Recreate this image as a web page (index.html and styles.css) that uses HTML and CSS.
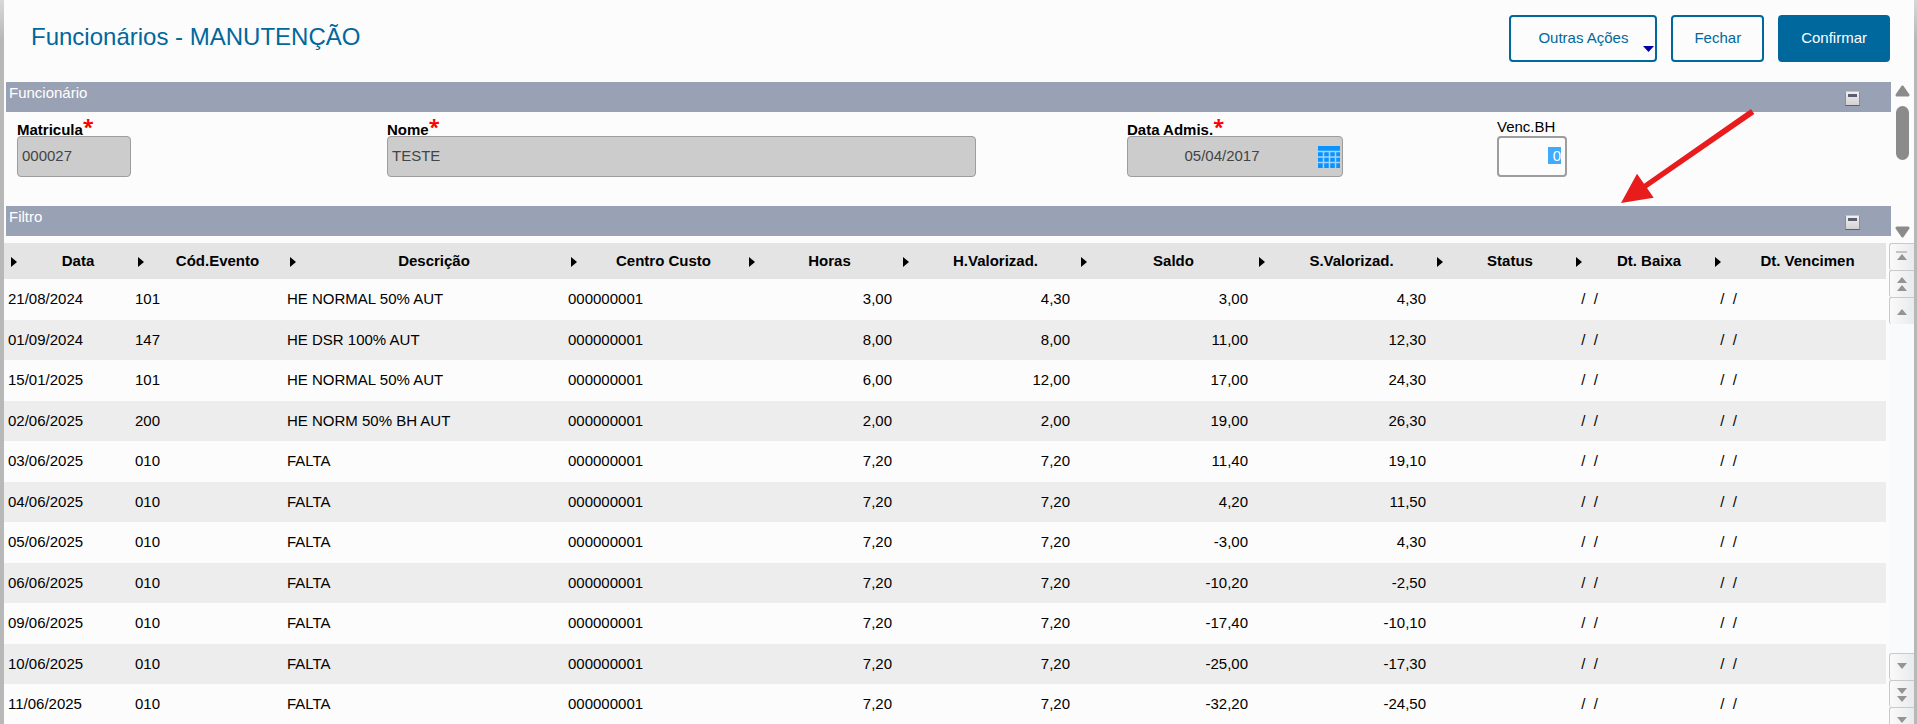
FILE: index.html
```html
<!DOCTYPE html>
<html lang="pt-BR">
  <head>
    <meta charset="utf-8" />
    <title>Funcionários - MANUTENÇÃO</title>
    <meta name="viewport" content="width=device-width, initial-scale=1.0" />
    <link rel="stylesheet" href="styles.css">
  </head>
  <body>
    <div class="window">
      <header class="toolbar">
        <h1>Funcionários - MANUTENÇÃO</h1>
        <div class="actions">
          <button type="button" class="btn btn-menu">
            Outras Ações
            <svg class="caret" width="11" height="6" viewBox="0 0 11 6"><path d="M0 0h11L5.500 6z" fill="#0000a8" /></svg>
          </button>
          <button type="button" class="btn">Fechar</button>
          <button type="button" class="btn btn-primary">Confirmar</button>
        </div>
      </header>

      <div class="form-area">
        <form class="panels">
          <div class="panel-title">
            <h2>Funcionário</h2>
            <button type="button" class="collapse" aria-label="Recolher Funcionário"></button>
          </div>
          <div class="fields">
            <div class="field">
              <label class="required" for="matricula">Matricula<span class="star">*</span></label>
              <input class="w-code" type="text" id="matricula" value="000027" disabled />
            </div>
            <div class="field field-wide">
              <label class="required" for="nome">Nome<span class="star">*</span></label>
              <input class="w-name" type="text" id="nome" value="TESTE" disabled />
            </div>
            <div class="field">
              <label class="required" for="admissao">Data Admis.<span class="star">*</span></label>
              <div class="date w-date">
                <input type="text" id="admissao" value="05/04/2017" disabled />
                <svg class="calendar" width="22" height="22" viewBox="0 0 22 22">
                  <path d="M0 0h22v22H0z" fill="#0a93ff" />
                  <path d="M0 5.500h22M0 11h22M0 16.500h22M5.500 5v17M11.500 5v17M17.500 5v17" stroke="#a4d2f8" stroke-width="1.500" />
                </svg>
              </div>
            </div>
            <div class="field">
              <label for="vencbh">Venc.BH</label>
              <input class="w-num" type="text" id="vencbh" value=" 0" />
            </div>
          </div>
          <div class="panel-title">
            <h2>Filtro</h2>
            <button type="button" class="collapse" aria-label="Recolher Filtro"></button>
          </div>
        </form>
        <div class="scrollbar">
          <svg width="15" height="12" viewBox="0 0 15 12"><path d="M7.500 2L13 10H2z" fill="#8b8b8b" stroke="#8b8b8b" stroke-width="3" stroke-linejoin="round" /></svg>
          <div class="thumb"></div>
          <svg class="down" width="15" height="12" viewBox="0 0 15 12"><path d="M7.500 10L13 2H2z" fill="#8b8b8b" stroke="#8b8b8b" stroke-width="3" stroke-linejoin="round" /></svg>
        </div>
      </div>

      <div class="grid">
        <table>
          <colgroup>
            <col class="c-date" />
            <col class="c-event" />
            <col class="c-desc" />
            <col class="c-value" />
            <col class="c-hours" />
            <col class="c-value" />
            <col class="c-value" />
            <col class="c-value" />
            <col class="c-status" />
            <col class="c-status" />
            <col class="c-value" />
          </colgroup>
          <thead>
            <tr id="grid-head"></tr>
          </thead>
          <tbody id="grid-body"></tbody>
        </table>
        <div class="grid-nav">
          <div>
            <button type="button" aria-label="Primeiro"><svg width="12" height="20" viewBox="0 0 12 20"><path d="M0 4h11v2H0z" fill="#c4c4c4" /><path d="M6 7l5 6H1z" /></svg></button>
            <button type="button" aria-label="Página anterior"><svg width="12" height="20" viewBox="0 0 12 20"><path d="M6 3l5 6H1zM6 11l5 6H1z" /></svg></button>
            <button type="button" aria-label="Anterior"><svg width="12" height="20" viewBox="0 0 12 20"><path d="M6 8l5 6H1z" /></svg></button>
          </div>
          <div>
            <button type="button" aria-label="Próximo"><svg width="12" height="20" viewBox="0 0 12 20"><path d="M6 12l5-6H1z" /></svg></button>
            <button type="button" aria-label="Próxima página"><svg width="12" height="20" viewBox="0 0 12 20"><path d="M6 10l5-6H1zM6 18l5-6H1z" /></svg></button>
            <button type="button" aria-label="Último"><svg width="12" height="20" viewBox="0 0 12 20"><path d="M6 12l5-6H1z" /><path d="M0 14h11v2H0z" fill="#c4c4c4" /></svg></button>
          </div>
        </div>
      </div>

      <svg class="pointer" width="134" height="94" viewBox="0 0 134 94">
        <path d="M0 94L16 64.700L23 74.700L130 0L133.300 5L26 79L32.700 88.700z" fill="#e81c1c" />
      </svg>
    </div>

    <script src="script.js"></script>
  </body>
</html>
```
FILE: styles.css
```css
* {
  box-sizing: border-box;
}

html {
  overflow: hidden;
}

body,
input,
button {
  font-family: "Liberation Sans", Arial, sans-serif;
  font-size: 15px;
}

body {
  margin: 0;
  padding: 0 3px 0 4px;
  background: linear-gradient(#d8d8d8, #b8b8b8 40px);
  color: #000;
}

.window {
  position: relative;
  min-height: 100vh;
  background: #fcfcfc;
}

.toolbar {
  display: flex;
  justify-content: space-between;
  align-items: flex-start;
  height: 82px;
  padding: 15px 24px 0 27px;
}

h1 {
  margin: 0;
  padding-top: 8px;
  font-size: 24px;
  font-weight: normal;
  line-height: 28px;
  color: #00689d;
}

.actions {
  display: flex;
  gap: 14px;
}

.btn {
  position: relative;
  height: 47px;
  padding: 0 21px 2px;
  border: 2px solid #00689d;
  border-radius: 4px;
  background: #fcfcfc;
  color: #00689d;
}

.btn-menu {
  padding: 0 27px 2px;
}

.caret {
  position: absolute;
  right: 1px;
  bottom: 8px;
}

.btn-primary {
  background: #00689d;
  color: #fff;
}

.form-area {
  display: flex;
}

.panels {
  flex: 1;
  padding-left: 2px;
}

.panel-title {
  display: flex;
  justify-content: space-between;
  height: 30px;
  padding: 2px 31px 0 3px;
  background: #99a1b5;
}

h2 {
  margin: 0;
  font-size: 15px;
  font-weight: normal;
  line-height: 18px;
  color: #fff;
}

.collapse {
  width: 15px;
  height: 15px;
  margin-top: 7px;
  padding: 0;
  border: 1px solid #8c8f9a;
  border-top-color: #c4c4c6;
  border-bottom-color: #5c606e;
  background: linear-gradient(#5a5e70, #5a5e70) 50% 2px / 9px 3px no-repeat, linear-gradient(#f0f0f0, #d2d2d4);
}

.fields {
  display: grid;
  grid-template-columns: repeat(5, 1fr);
  height: 94px;
  padding: 6px 24px 0 11px;
}

.field-wide {
  grid-column: span 2;
}

.field label {
  display: block;
  height: 18px;
  line-height: 18px;
}

.field .required {
  padding-top: 1px;
  font-weight: bold;
}

.star {
  font-family: "Open Sans", sans-serif;
  font-size: 20px;
  line-height: 16px;
  vertical-align: 1px;
  color: #f00;
}

.field input {
  display: block;
  height: 41px;
  padding: 0 4px 2px;
  border: 1px solid #9d9d9d;
  border-radius: 4px;
  background: #ccc;
  color: #444;
}

.w-code {
  width: 114px;
}

.w-name {
  width: 589px;
}

.w-date {
  width: 216px;
}

.date {
  position: relative;
}

.date input {
  width: 100%;
  padding-right: 30px;
  text-align: center;
}

.calendar {
  position: absolute;
  top: 10px;
  right: 3px;
}

.field .w-num {
  width: 70px;
  border-width: 2px;
  background: #fcfcfc;
  text-align: right;
  outline: none;
}

.w-num::selection {
  background: #3fabff;
  color: #fff;
}

.scrollbar {
  display: flex;
  flex-direction: column;
  align-items: center;
  width: 23px;
  margin-bottom: -2px;
  padding: 3px 0 0;
}

.thumb {
  width: 13px;
  height: 54px;
  margin-top: 9px;
  border-radius: 7px;
  background: #8b8b8b;
}

.down {
  margin-top: auto;
}

.grid {
  display: flex;
  align-items: stretch;
  margin-top: 7px;
}

table {
  flex: 1;
  width: 100%;
  align-self: flex-start;
  margin-bottom: 9px;
  border-collapse: collapse;
  table-layout: fixed;
}

.c-date {
  width: 127px;
}

.c-event {
  width: 152px;
}

.c-desc {
  width: 281px;
}

.c-value {
  width: 178px;
}

.c-hours {
  width: 154px;
}

.c-status {
  width: 139px;
}

th {
  height: 36px;
  padding: 0 0 2px 7px;
  background: #e4e4e4;
}

.head {
  display: flex;
  align-items: center;
}

.head span {
  flex: 1;
  padding-left: 8px;
}

.head svg {
  margin-top: 4px;
}

td {
  height: 41px;
  padding: 0 4px 2px;
  white-space: pre;
}

tr:nth-child(even) td {
  height: 40px;
  background: #ededed;
}

.num {
  text-align: right;
}

.grid-nav {
  display: flex;
  flex-direction: column;
  justify-content: space-between;
  width: 25px;
  margin-left: 3px;
  background: #f9fafc;
}

.grid-nav button {
  display: flex;
  align-items: center;
  justify-content: center;
  width: 25px;
  height: 27px;
  padding: 0;
  border: solid #c9c9c9;
  border-width: 1px 0 0 1px;
  border-radius: 3px 0 0 3px;
  background: linear-gradient(90deg, #fafafa, #e9eaee);
  fill: #949494;
}

/* hand-drawn arrow over the form */
.pointer {
  position: absolute;
  top: 109px;
  right: 159px;
}
```
FILE: script.js
```js
const columns = [
  "Data", "Cód.Evento", "Descrição", "Centro Custo", "Horas", "H.Valorizad.",
  "Saldo", "S.Valorizad.", "Status", "Dt. Baixa", "Dt. Vencimen",
];

const rows = [
  ["21/08/2024", "101", "HE NORMAL 50% AUT", "3,00", "4,30", "3,00", "4,30"],
  ["01/09/2024", "147", "HE DSR 100% AUT", "8,00", "8,00", "11,00", "12,30"],
  ["15/01/2025", "101", "HE NORMAL 50% AUT", "6,00", "12,00", "17,00", "24,30"],
  ["02/06/2025", "200", "HE NORM 50% BH AUT", "2,00", "2,00", "19,00", "26,30"],
  ["03/06/2025", "010", "FALTA", "7,20", "7,20", "11,40", "19,10"],
  ["04/06/2025", "010", "FALTA", "7,20", "7,20", "4,20", "11,50"],
  ["05/06/2025", "010", "FALTA", "7,20", "7,20", "-3,00", "4,30"],
  ["06/06/2025", "010", "FALTA", "7,20", "7,20", "-10,20", "-2,50"],
  ["09/06/2025", "010", "FALTA", "7,20", "7,20", "-17,40", "-10,10"],
  ["10/06/2025", "010", "FALTA", "7,20", "7,20", "-25,00", "-17,30"],
  ["11/06/2025", "010", "FALTA", "7,20", "7,20", "-32,20", "-24,50"],
];

const marker =
  '<svg width="6" height="10" viewBox="0 0 6 10"><path d="M0 0l6 5-6 5z" /></svg>';

document.getElementById("grid-head").innerHTML = columns
  .map((name) => `<th><div class="head">${marker}<span>${name}</span></div></th>`)
  .join("");

document.getElementById("grid-body").innerHTML = rows
  .map(([date, event, description, ...values]) => {
    const text = [date, event, description, "000000001"];
    const cells = text.map((value) => `<td>${value}</td>`);
    values.forEach((value) => cells.push(`<td class="num">${value}</td>`));
    cells.push("<td></td>", "<td>  /  /  </td>", "<td>  /  /  </td>");
    return `<tr>${cells.join("")}</tr>`;
  })
  .join("");

// The editable field starts focused with its value selected
const vencbh = document.getElementById("vencbh");
vencbh.focus();
vencbh.select();
```
